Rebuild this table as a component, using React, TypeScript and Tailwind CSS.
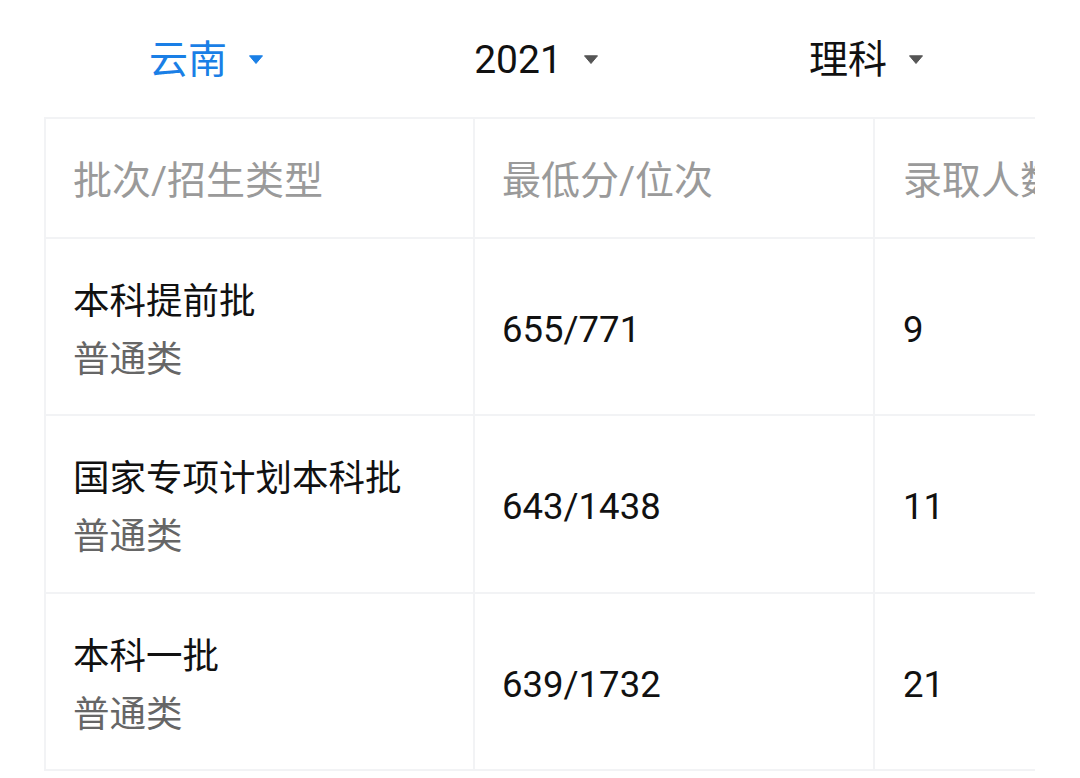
import React from "react";

const rows = [
  { name: "本科提前批", type: "普通类", score: "655/771", count: "9", h: "h-[177px]" },
  { name: "国家专项计划本科批", type: "普通类", score: "643/1438", count: "11", h: "h-[178px]" },
  { name: "本科一批", type: "普通类", score: "639/1732", count: "21", h: "h-[177px]" },
];

function Caret({ color }: { color: string }) {
  return (
    <svg width="14" height="9" viewBox="0 0 14 9" className="ml-[22px] mb-[3px]">
      <path d="M0.5 0.8 L13.5 0.8 L7 8.5 Z" fill={color} strokeLinejoin="round" stroke={color} strokeWidth="1" />
    </svg>
  );
}

export default function App() {
  return (
    <div
      className="w-[1080px] h-[778px] bg-white overflow-hidden"
      style={{ fontFamily: 'Roboto, "Noto Sans CJK SC", sans-serif' }}
    >
      <div className="h-[117px] grid grid-cols-3 pl-[41px] pr-[49px] items-center">
        <div className="flex items-center justify-center pt-[4px]">
          <span className="text-[39px] leading-none text-[#1a7fe6]">云南</span>
          <Caret color="#1a7fe6" />
        </div>
        <div className="flex items-center justify-center pt-[4px]">
          <span className="text-[39px] leading-none text-[#111]">2021</span>
          <Caret color="#555" />
        </div>
        <div className="flex items-center justify-center pt-[4px]">
          <span className="text-[39px] leading-none text-[#111]">理科</span>
          <Caret color="#555" />
        </div>
      </div>
      <div className="ml-[44px] w-[991px] overflow-hidden">
        <div className="w-[1300px] border-l-2 border-t-2 border-[#f2f3f5]">
          <div className="flex h-[120px] border-b-2 border-[#f2f3f5] text-[39px] text-[#9a9a9a]">
            <div className="w-[429px] border-r-2 border-[#f2f3f5] flex items-center pl-[27px] pt-[6px]">批次/招生类型</div>
            <div className="w-[400px] border-r-2 border-[#f2f3f5] flex items-center pl-[27px] pt-[6px]">最低分/位次</div>
            <div className="w-[400px] border-r-2 border-[#f2f3f5] flex items-center pl-[28px] pt-[6px]">录取人数</div>
          </div>
          {rows.map((r) => (
            <div key={r.name} className={`flex ${r.h} border-b-2 border-[#f2f3f5] text-[36.5px]`}>
              <div className="w-[429px] border-r-2 border-[#f2f3f5] flex flex-col justify-center pl-[27px] pt-[8px]">
                <div className="leading-[58px] text-[#111]">{r.name}</div>
                <div className="leading-[58px] text-[#666]">{r.type}</div>
              </div>
              <div className="w-[400px] border-r-2 border-[#f2f3f5] flex items-center pl-[27px] pt-[7px] text-[#111]">{r.score}</div>
              <div className="w-[400px] border-r-2 border-[#f2f3f5] flex items-center pl-[28px] pt-[7px] text-[#111]">{r.count}</div>
            </div>
          ))}
        </div>
      </div>
    </div>
  );
}
